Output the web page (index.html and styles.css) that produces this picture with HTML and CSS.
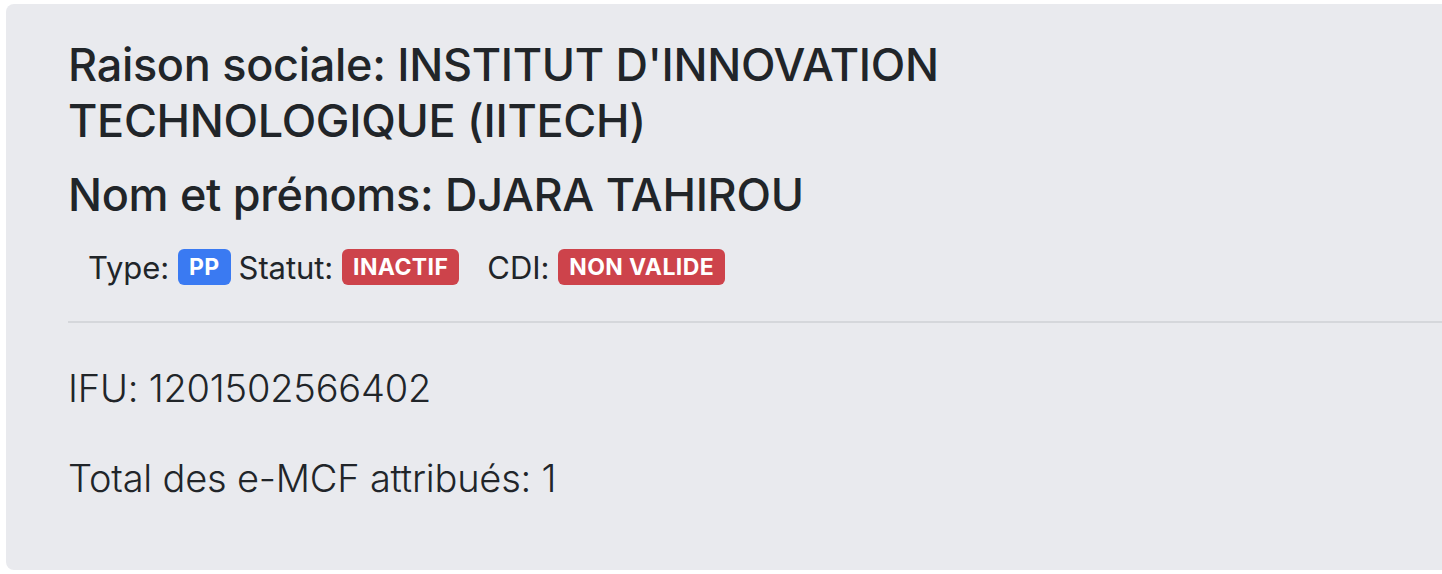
FILE: index.html
```html
<!DOCTYPE html>
<html lang="fr">
<head>
<meta charset="utf-8">
<title>Contribuable</title>
<link rel="stylesheet" href="styles.css">
</head>
<body>
<div class="card">
  <div class="head">
    <h2 class="title">Raison sociale: INSTITUT D'INNOVATION TECHNOLOGIQUE (IITECH)</h2>
    <h2 class="title name">Nom et prénoms: DJARA TAHIROU</h2>
  </div>
  <div class="tags">
    <span class="lbl">Type:</span>
    <span class="badge blue">PP</span>
    <span class="lbl">Statut:</span>
    <span class="badge red">INACTIF</span>
    <span class="lbl cdi">CDI:</span>
    <span class="badge red">NON VALIDE</span>
  </div>
  <hr class="sep">
  <p class="info">IFU: 1201502566402</p>
  <p class="info">Total des e-MCF attribués: 1</p>
</div>
</body>
</html>
```

FILE: styles.css
```css
html, body {
  margin: 0;
  padding: 0;
  background: #ffffff;
  overflow: hidden;
}
body {
  padding: 4px 0 0 6px;
  font-family: Inter, "Noto Sans", "Liberation Sans", sans-serif;
  color: #212529;
}
.card {
  background: #e9eaee;
  border-radius: 8px;
  margin-right: -20px;
  padding: 33px 0 0 62px;
  height: 566px;
  box-sizing: border-box;
}
.head {
  width: 960px;
}
.title {
  margin: 0 0 18px 0;
  font-size: 45px;
  line-height: 56px;
  font-weight: 500;
  letter-spacing: -0.3px;
}
.title.name {
  margin-bottom: 0;
}
.tags {
  display: flex;
  align-items: center;
  padding-left: 20px;
  margin-top: 26px;
  height: 36px;
  font-size: 31px;
}
.lbl {
  margin-right: 9px;
  letter-spacing: -0.1px;
}
.badge {
  display: inline-flex;
  align-items: center;
  height: 36px;
  padding: 0 11px;
  border-radius: 6px;
  color: #ffffff;
  font-weight: 700;
  font-size: 23px;
  letter-spacing: 0.4px;
  margin-right: 8px;
}
.lbl.cdi {
  margin-left: 20px;
}
.blue { background: #3a7af2; }
.red { background: #cd434b; }
.sep {
  border: 0;
  border-top: 2px solid #d5d7db;
  margin: 36px 0 0 0;
}
.info {
  margin: 42px 0 0 0;
  font-size: 38px;
  line-height: 46px;
  font-weight: 300;
  letter-spacing: -0.2px;
}
.info + .info {
  margin-top: 44px;
}
```
